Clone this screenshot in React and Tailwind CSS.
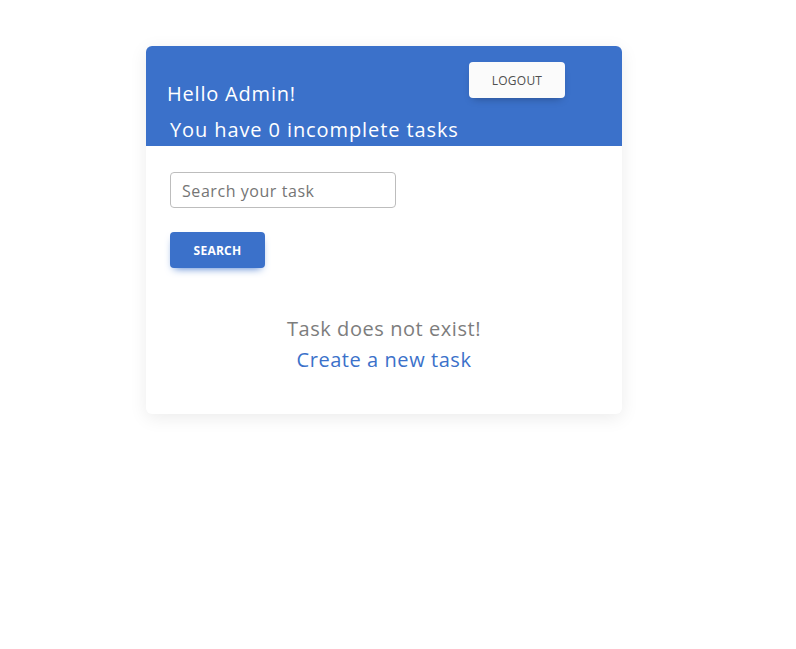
import React from 'react';

const App = () => {
  return (
    <div className="min-h-[649px] w-full bg-white pt-[46px] pl-[146px]" style={{ fontFamily: '"Open Sans", "Noto Sans", sans-serif' }}>
      <div className="w-[476px] rounded-[6px] bg-white shadow-[0_4px_18px_rgba(0,0,0,0.08)] overflow-hidden">
        {/* header */}
        <div className="h-[100px] bg-[#3b71ca] pl-[21px] pt-[16px] text-white">
          <div className="flex items-start">
            <h1 className="mt-[17px] text-[20px] leading-[30px] font-medium tracking-[0.04em]">Hello Admin!</h1>
            <button className="ml-auto mr-[57px] h-[36px] w-[96px] rounded-[4px] bg-[#fbfbfb] pt-[2px] text-[12px] font-medium tracking-[0.02em] text-[#4f4f4f] shadow-[0_4px_9px_-4px_rgba(0,0,0,0.35)]">
              LOGOUT
            </button>
          </div>
          <h2 className="ml-[3px] mt-[6px] text-[20px] leading-[30px] font-medium tracking-[0.045em]">You have 0 incomplete tasks</h2>
        </div>

        {/* body */}
        <div className="px-[24px] pt-[26px] pb-[39px]">
          <input
            type="text"
            placeholder="Search your task"
            className="block h-[36px] w-[226px] rounded-[4px] border border-[#bdbdbd] px-[11px] pt-[1px] text-[16px] tracking-[0.035em] text-[#4f4f4f] placeholder-[#757575] outline-none"
          />
          <button className="mt-[24px] h-[36px] w-[95px] rounded-[4px] bg-[#3b71ca] pt-[2px] text-[12px] font-bold tracking-[0.02em] text-white shadow-[0_4px_9px_-4px_#3b71ca]">
            SEARCH
          </button>

          <div className="mt-[45px] flex flex-col items-center tracking-[0.035em]">
            <p className="text-[20px] leading-[31px] text-[#7d7d7d]">Task does not exist!</p>
            <a href="#" className="text-[20px] leading-[31px] text-[#3b71ca]">Create a new task</a>
          </div>
        </div>
      </div>
    </div>
  );
};

export default App;
